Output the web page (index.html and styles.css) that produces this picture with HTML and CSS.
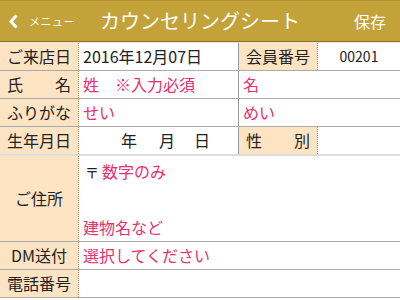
FILE: index.html
```html
<!DOCTYPE html>
<html lang="ja">
<head>
  <meta charset="UTF-8">
  <title>カウンセリングシート</title>
  <link rel="stylesheet" href="styles.css">
</head>
<body>

<header class="bar">
  <a class="back">
    <svg width="11" height="15" viewBox="0 0 11 15"><path d="M8.5 1.5 L3 7.5 L8.5 13.5" fill="none" stroke="#fff" stroke-width="3"/></svg>
    <span class="menu">メニュー</span>
  </a>
  <h1 class="title">カウンセリングシート</h1>
  <span class="save">保存</span>
</header>

<div class="sheet">
  <div class="row r1">
    <div class="lbl">ご来店日</div>
    <div class="val">2016年12月07日</div>
    <div class="lbl lbl2">会員番号</div>
    <div class="val num">00201</div>
  </div>
  <div class="row">
    <div class="lbl spread"><span>氏</span><span>名</span></div>
    <div class="val ph">姓　※入力必須</div>
    <div class="val ph split">名</div>
  </div>
  <div class="row">
    <div class="lbl">ふりがな</div>
    <div class="val ph">せい</div>
    <div class="val ph split">めい</div>
  </div>
  <div class="row birth">
    <div class="lbl">生年月日</div>
    <div class="val ymd"><span class="y">年</span><span class="m">月</span><span class="d">日</span></div>
    <div class="lbl lbl2 spread"><span>性</span><span>別</span></div>
    <div class="val"></div>
  </div>
  <div class="row addr">
    <div class="lbl">ご住所</div>
    <div class="val lines">
      <div><span class="zip">〒</span><span class="ph">数字のみ</span></div>
      <div></div>
      <div class="ph">建物名など</div>
    </div>
  </div>
  <div class="row">
    <div class="lbl">DM送付</div>
    <div class="val ph">選択してください</div>
  </div>
  <div class="row">
    <div class="lbl">電話番号</div>
    <div class="val"></div>
  </div>
</div>

</body>
</html>
```

FILE: styles.css
```css
body { margin: 0; font-family: "Noto Sans CJK JP", "Noto Sans", sans-serif; background: #fff; color: #222; }

.bar { height: 40px; background: #c4a23a; border-top: 1px solid #b3922f; border-bottom: 1px solid #8c7228; display: flex; align-items: center; justify-content: space-between; padding: 0 14px 0 8px; color: #fff; position: relative; }
.back { display: flex; align-items: center; gap: 10px; }
.menu { font-size: 11px; letter-spacing: 0.5px; }
.title { position: absolute; left: 0; right: 0; top: 0; margin: 0; text-align: center; font-size: 20px; font-weight: normal; line-height: 40px; pointer-events: none; }
.save { font-size: 16px; }

.sheet { border-top: 1px solid #ece3d2; }
.row { display: grid; grid-template-columns: 79px 159px 80px 1fr; height: 27px; border-bottom: 1px solid #aaa; }
.row.birth { border-bottom: 2px solid #ddd; }
.row.addr { height: 85px; }

.lbl { background: #ffe4c4; border-right: 1px dotted #a39070; font-size: 16px; line-height: 27px; text-align: center; color: #222; }
.lbl2 { border-left: 1px solid #999; }
.spread { display: flex; justify-content: space-between; padding: 0 7px; }
.addr .lbl { display: flex; align-items: center; justify-content: center; }

.val { font-size: 16px; line-height: 27px; padding-left: 4px; white-space: nowrap; }
.num { font-size: 14px; text-align: center; padding-left: 0; }
.ph { color: #e8306e; }
.row .split { grid-column: 3 / 5; border-left: 1px solid #999; padding-left: 4px; }
.addr .val, .row:nth-child(6) .val, .row:nth-child(7) .val { grid-column: 2 / 5; }

.ymd .y { margin-left: 38px; }
.ymd .m { margin-left: 22px; }
.ymd .d { margin-left: 19px; }

.lines { padding-top: 1px; }
.lines > div { height: 28px; line-height: 28px; }
.zip { color: #222; font-size: 14px; margin: 0 3px 0 2px; }
```
